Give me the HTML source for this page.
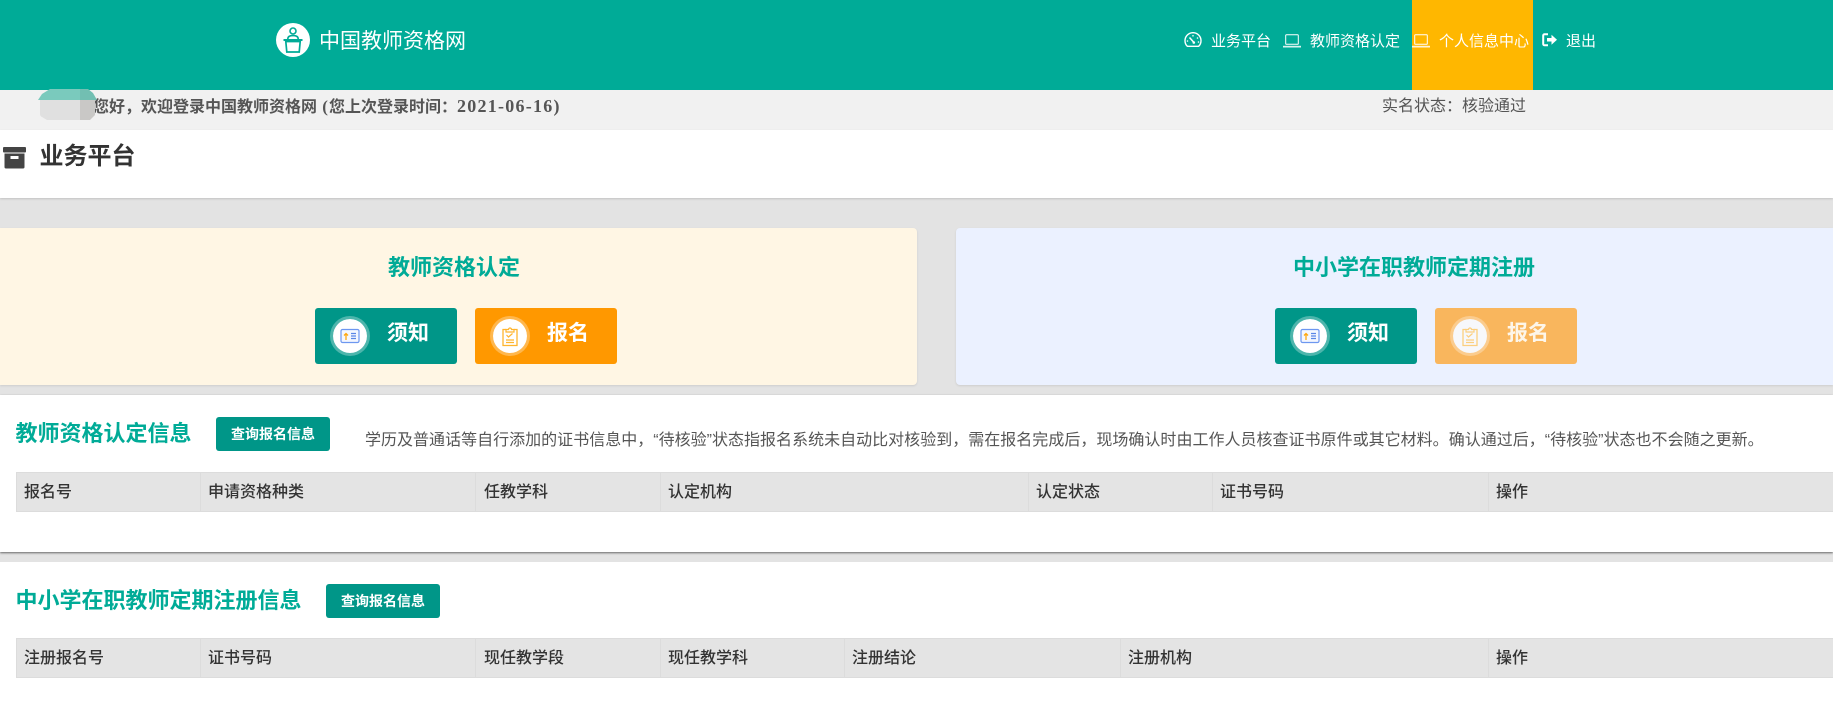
<!DOCTYPE html>
<html lang="zh-CN">
<head>
<meta charset="utf-8">
<title>中国教师资格网</title>
<style>
html,body{margin:0;padding:0;width:1833px;height:714px;overflow:hidden;background:#e3e3e3;}
body{position:relative;font-family:"Liberation Sans","Noto Sans CJK SC",sans-serif;color:#333;}
.a{position:absolute;}
.t{position:absolute;white-space:nowrap;}
.nav{color:#fff;font-size:15px;line-height:20px;top:32px;}
.btn{position:absolute;width:142px;height:56px;top:308px;border-radius:3px;}
.green{background:#009688;}
.orange{background:#ff9800;}
.faded{background:#f9b65d;}
.circle{position:absolute;left:15px;top:8px;width:34px;height:34px;border-radius:50%;background:#fff;background-clip:padding-box;border:3px solid rgba(255,255,255,.3);}
.btn b{position:absolute;left:72px;top:13px;font-size:21px;line-height:26px;color:#fff;font-weight:700;white-space:nowrap;}
.btn svg{position:absolute;left:0;top:0;width:34px;height:34px;}
.faded .circle{background-color:#f7f8fb;}
.faded svg{opacity:.6;}
.faded b{color:#fdf6ea;}
.title{color:#00ab97;font-size:22px;font-weight:700;line-height:30px;}
.q{position:absolute;width:114px;height:34px;background:#009688;border-radius:3px;color:#fff;font-size:14px;font-weight:700;line-height:34px;text-align:center;}
.tb{position:absolute;left:16px;width:1817px;height:38px;background:#e4e4e4;border:1px solid #dcdcdc;border-right:0;box-sizing:content-box;}
.tb i{position:absolute;top:0;bottom:0;width:1px;background:#dcdcdc;}
.tb span{position:absolute;top:1px;font-size:16px;line-height:38px;font-weight:500;color:#333;white-space:nowrap;}
</style>
</head>
<body>
<!-- header -->
<div class="a" style="left:0;top:0;width:1833px;height:90px;background:#00ab97;"></div>
<div class="a" style="left:1412px;top:0;width:121px;height:90px;background:#ffb700;"></div>

<svg class="a" style="left:276px;top:23px;" width="34" height="34" viewBox="0 0 34 34">
  <circle cx="17" cy="17" r="17" fill="#fff"/>
  <circle cx="17" cy="8" r="3" fill="none" stroke="#00ab97" stroke-width="1.600"/>
  <path d="M11.800 16c0-2.400 2-3.400 5.200-3.400s5.200 1 5.200 3.400" fill="none" stroke="#00ab97" stroke-width="1.600"/>
  <rect x="7.500" y="16" width="19" height="2" fill="#00ab97"/>
  <path d="M9.800 18.500h14.400l-1 10.500h-12.400z" fill="#fff" stroke="#00ab97" stroke-width="1.700"/>
</svg>
<div class="t" style="left:319px;top:27px;font-size:21px;line-height:30px;color:#fff;">中国教师资格网</div>

<!-- gauge -->
<svg class="a" style="left:1184px;top:32px;" width="18" height="16" viewBox="0 0 18 16">
  <path d="M3.300 14.300A8 8 0 1 1 14.700 14.300z" fill="none" stroke="#fff" stroke-width="1.400" stroke-linejoin="round"/>
  <path d="M5.500 5.500L9.500 10" stroke="#fff" stroke-width="1.500"/>
  <circle cx="9.800" cy="10.500" r="1.300" fill="#fff"/>
  <circle cx="9" cy="3.800" r=".8" fill="#fff"/><circle cx="13.500" cy="6" r=".8" fill="#fff"/><circle cx="3.500" cy="9" r=".8" fill="#fff"/><circle cx="14.500" cy="10" r=".8" fill="#fff"/>
</svg>
<div class="t nav" style="left:1211px;">业务平台</div>

<svg class="a" style="left:1283px;top:34px;" width="18" height="14" viewBox="0 0 18 14">
  <rect x="2.700" y=".7" width="12.600" height="9.600" rx=".8" fill="none" stroke="#fff" stroke-width="1"/>
  <rect x="0" y="11.800" width="18" height="1.700" fill="#fff" opacity=".85"/>
</svg>
<div class="t nav" style="left:1310px;">教师资格认定</div>

<svg class="a" style="left:1412px;top:34px;" width="18" height="14" viewBox="0 0 18 14">
  <rect x="2.700" y=".7" width="12.600" height="9.600" rx=".8" fill="none" stroke="#fff" stroke-width="1"/>
  <rect x="0" y="11.800" width="18" height="1.700" fill="#fff" opacity=".85"/>
</svg>
<div class="t nav" style="left:1439px;">个人信息中心</div>

<svg class="a" style="left:1542px;top:33px;" width="15" height="14" viewBox="0 0 15 14">
  <path d="M6 1.200H2.500A1.300 1.300 0 0 0 1.200 2.500v8.500a1.300 1.300 0 0 0 1.300 1.300H6" fill="none" stroke="#fff" stroke-width="2"/>
  <path d="M5 5h4.500V1.800L15 6.800l-5.500 5V8.500H5z" fill="#fff"/>
</svg>
<div class="t nav" style="left:1566px;">退出</div>

<!-- greeting bar -->
<div class="a" style="left:0;top:90px;width:1833px;height:40px;background:#f1f1f1;"></div>
<div class="t" style="left:93px;top:94px;font-size:16px;line-height:24px;font-weight:700;color:#555;font-family:'Liberation Serif','Noto Sans CJK SC',serif;">您好，欢迎登录中国教师资格网<span style="font-size:17px;letter-spacing:1px;"> (</span>您上次登录时间：<span style="font-size:18px;letter-spacing:1.250px;">2021-06-16)</span></div>
<div class="t" style="left:1382px;top:95px;font-size:16px;line-height:24px;color:#555;">实名状态：核验通过</div>
<svg class="a" style="left:38px;top:89px;" width="60" height="32" viewBox="0 0 60 32">
  <path d="M2 11V25Q2 27 4 28L9 31H42V11z" fill="#e0e0e0"/>
  <path d="M42 11H57V26L52 31H42z" fill="#c9c8c6"/>
  <path d="M0 11L4 5L12 0H42V11z" fill="#7acabd"/>
  <path d="M42 0H50L55 4L59 11H42z" fill="#72bfb2"/>
</svg>

<!-- section: platform -->
<div class="a" style="left:0;top:130px;width:1833px;height:68px;background:#fff;box-shadow:0 1px 2px rgba(0,0,0,.15);"></div>
<svg class="a" style="left:3px;top:147px;" width="24" height="22" viewBox="0 0 24 22">
  <rect x="0" y="0" width="23" height="5.500" rx="1" fill="#444"/>
  <path d="M1.500 6.500h20V20a1.500 1.500 0 0 1-1.500 1.500H3A1.500 1.500 0 0 1 1.500 20z" fill="#444"/>
  <rect x="7.500" y="9" width="8" height="3" fill="#fff"/>
</svg>
<div class="t" style="left:39.500px;top:140px;font-size:24px;line-height:34px;font-weight:700;color:#333;">业务平台</div>

<!-- cards -->
<div class="a" style="left:0;top:228px;width:917px;height:157px;background:#fff6e4;border-radius:0 4px 4px 0;box-shadow:0 1px 2px rgba(0,0,0,.1);"></div>
<div class="a" style="left:956px;top:228px;width:877px;height:157px;background:#ebf1ff;border-radius:4px 0 0 4px;box-shadow:0 1px 2px rgba(0,0,0,.1);"></div>
<div class="t title" style="left:388px;top:253px;">教师资格认定</div>
<div class="t title" style="left:1293px;top:253px;">中小学在职教师定期注册</div>

<div class="btn green" style="left:315px;"><div class="circle">
  <svg viewBox="0 0 34 34"><rect x="8" y="10.500" width="18" height="13" rx="1.500" fill="#f4f7ff" stroke="#6d97f0" stroke-width="1.200"/><path d="M13 21v-6M11 16.500l2-2 2 2" fill="none" stroke="#ffa80f" stroke-width="1.300"/><path d="M18 14.500h5M18 17h5M18 19.500h5" stroke="#5a86e6" stroke-width="1.200"/></svg>
</div><b>须知</b></div>
<div class="btn orange" style="left:475px;"><div class="circle">
  <svg viewBox="0 0 34 34"><path d="M13 10.500h-3v16h14v-16h-3" fill="none" stroke="#ffb52e" stroke-width="1.300"/><path d="M13 10.500h2.500a1.500 1.500 0 0 1 3 0H21v2.500h-8z" fill="none" stroke="#ffb52e" stroke-width="1.200"/><path d="M13.500 16l2 2 4-3.500M13 21h8M13 23.500h8" fill="none" stroke="#ffb52e" stroke-width="1.200"/></svg>
</div><b>报名</b></div>

<div class="btn green" style="left:1275px;"><div class="circle">
  <svg viewBox="0 0 34 34"><rect x="8" y="10.500" width="18" height="13" rx="1.500" fill="#f4f7ff" stroke="#6d97f0" stroke-width="1.200"/><path d="M13 21v-6M11 16.500l2-2 2 2" fill="none" stroke="#ffa80f" stroke-width="1.300"/><path d="M18 14.500h5M18 17h5M18 19.500h5" stroke="#5a86e6" stroke-width="1.200"/></svg>
</div><b>须知</b></div>
<div class="btn faded" style="left:1435px;"><div class="circle">
  <svg viewBox="0 0 34 34"><path d="M13 10.500h-3v16h14v-16h-3" fill="none" stroke="#ffb52e" stroke-width="1.300"/><path d="M13 10.500h2.500a1.500 1.500 0 0 1 3 0H21v2.500h-8z" fill="none" stroke="#ffb52e" stroke-width="1.200"/><path d="M13.500 16l2 2 4-3.500M13 21h8M13 23.500h8" fill="none" stroke="#ffb52e" stroke-width="1.200"/></svg>
</div><b>报名</b></div>

<!-- info section 1 -->
<div class="a" style="left:0;top:395px;width:1833px;height:157px;background:#fff;box-shadow:0 1px 2px rgba(0,0,0,.55);"></div>
<div class="t title" style="left:15.500px;top:419px;">教师资格认定信息</div>
<div class="q" style="left:216px;top:417px;">查询报名信息</div>
<div class="t" style="left:365px;top:429px;font-size:16px;line-height:24px;color:#555;letter-spacing:.015px;">学历及普通话等自行添加的证书信息中，“待核验”状态指报名系统未自动比对核验到，需在报名完成后，现场确认时由工作人员核查证书原件或其它材料。确认通过后，“待核验”状态也不会随之更新。</div>
<div class="tb" style="top:472px;">
  <i style="left:183px"></i><i style="left:458px"></i><i style="left:643px"></i><i style="left:1011px"></i><i style="left:1195px"></i><i style="left:1471px"></i>
  <span style="left:7px">报名号</span><span style="left:191px">申请资格种类</span><span style="left:467px">任教学科</span><span style="left:651px">认定机构</span><span style="left:1019px">认定状态</span><span style="left:1203px">证书号码</span><span style="left:1479px">操作</span>
</div>

<!-- info section 2 -->
<div class="a" style="left:0;top:562px;width:1833px;height:152px;background:#fff;"></div>
<div class="t title" style="left:15.500px;top:586px;">中小学在职教师定期注册信息</div>
<div class="q" style="left:326px;top:584px;">查询报名信息</div>
<div class="tb" style="top:638px;">
  <i style="left:183px"></i><i style="left:458px"></i><i style="left:643px"></i><i style="left:827px"></i><i style="left:1103px"></i><i style="left:1471px"></i>
  <span style="left:7px">注册报名号</span><span style="left:191px">证书号码</span><span style="left:467px">现任教学段</span><span style="left:651px">现任教学科</span><span style="left:835px">注册结论</span><span style="left:1111px">注册机构</span><span style="left:1479px">操作</span>
</div>
</body>
</html>
